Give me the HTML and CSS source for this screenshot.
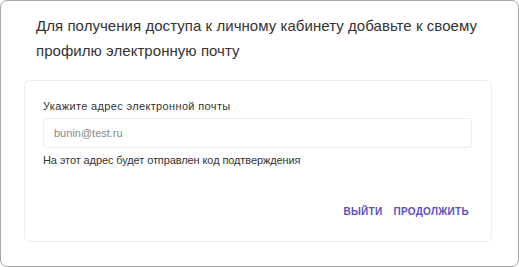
FILE: index.html
```html
<!DOCTYPE html>
<html lang="ru">
<head>
<meta charset="utf-8">
<link rel="stylesheet" href="styles.css">
</head>
<body>
<div class="frame">
  <h1 class="title">Для получения доступа к личному кабинету добавьте к своему профилю электронную почту</h1>
  <div class="card">
    <label class="label" for="email">Укажите адрес электронной почты</label>
    <input class="input" id="email" type="text" placeholder="bunin@test.ru">
    <div class="hint">На этот адрес будет отправлен код подтверждения</div>
    <div class="actions">
      <button class="btn">Выйти</button>
      <button class="btn">Продолжить</button>
    </div>
  </div>
</div>
</body>
</html>
```

FILE: styles.css
```css
html, body {
  margin: 0;
  padding: 0;
  background: #fff;
}
body {
  font-family: "Liberation Sans", Arial, sans-serif;
  color: #333;
}
.frame {
  box-sizing: border-box;
  width: 519px;
  height: 267px;
  border: 1px solid #a8a8a8;
  border-radius: 7px;
  padding: 12px 26px 0 23px;
}
.title {
  margin: 0 0 0 12px;
  font-size: 15px;
  font-weight: normal;
  letter-spacing: 0.05px;
  line-height: 25px;
  color: #333;
}
.card {
  margin-top: 17px;
  box-sizing: border-box;
  width: 468px;
  height: 162px;
  border: 1px solid #ececec;
  border-radius: 6px;
  padding: 18px 19px 0 18px;
  display: flex;
  flex-direction: column;
}
.label {
  font-size: 11px;
  letter-spacing: 0.35px;
  line-height: 14px;
  color: #333;
}
.input {
  margin-top: 5px;
  box-sizing: border-box;
  width: 429px;
  height: 30px;
  border: 1px solid #ececec;
  border-radius: 4px;
  padding: 0 10px;
  font-family: "Liberation Sans", Arial, sans-serif;
  font-size: 11px;
  color: #333;
  outline: none;
}
.input::placeholder {
  color: #888;
}
.hint {
  margin-top: 5px;
  font-size: 11px;
  letter-spacing: -0.1px;
  line-height: 14px;
  color: #333;
}
.actions {
  margin-top: 38px;
  display: flex;
  justify-content: flex-end;
  gap: 11px;
  padding-right: 3px;
}
.btn {
  border: 0;
  background: none;
  padding: 0;
  font-family: "Liberation Sans", Arial, sans-serif;
  font-weight: bold;
  font-size: 10px;
  line-height: 14px;
  letter-spacing: 0.3px;
  text-transform: uppercase;
  color: #5b50c2;
  cursor: pointer;
}
```
